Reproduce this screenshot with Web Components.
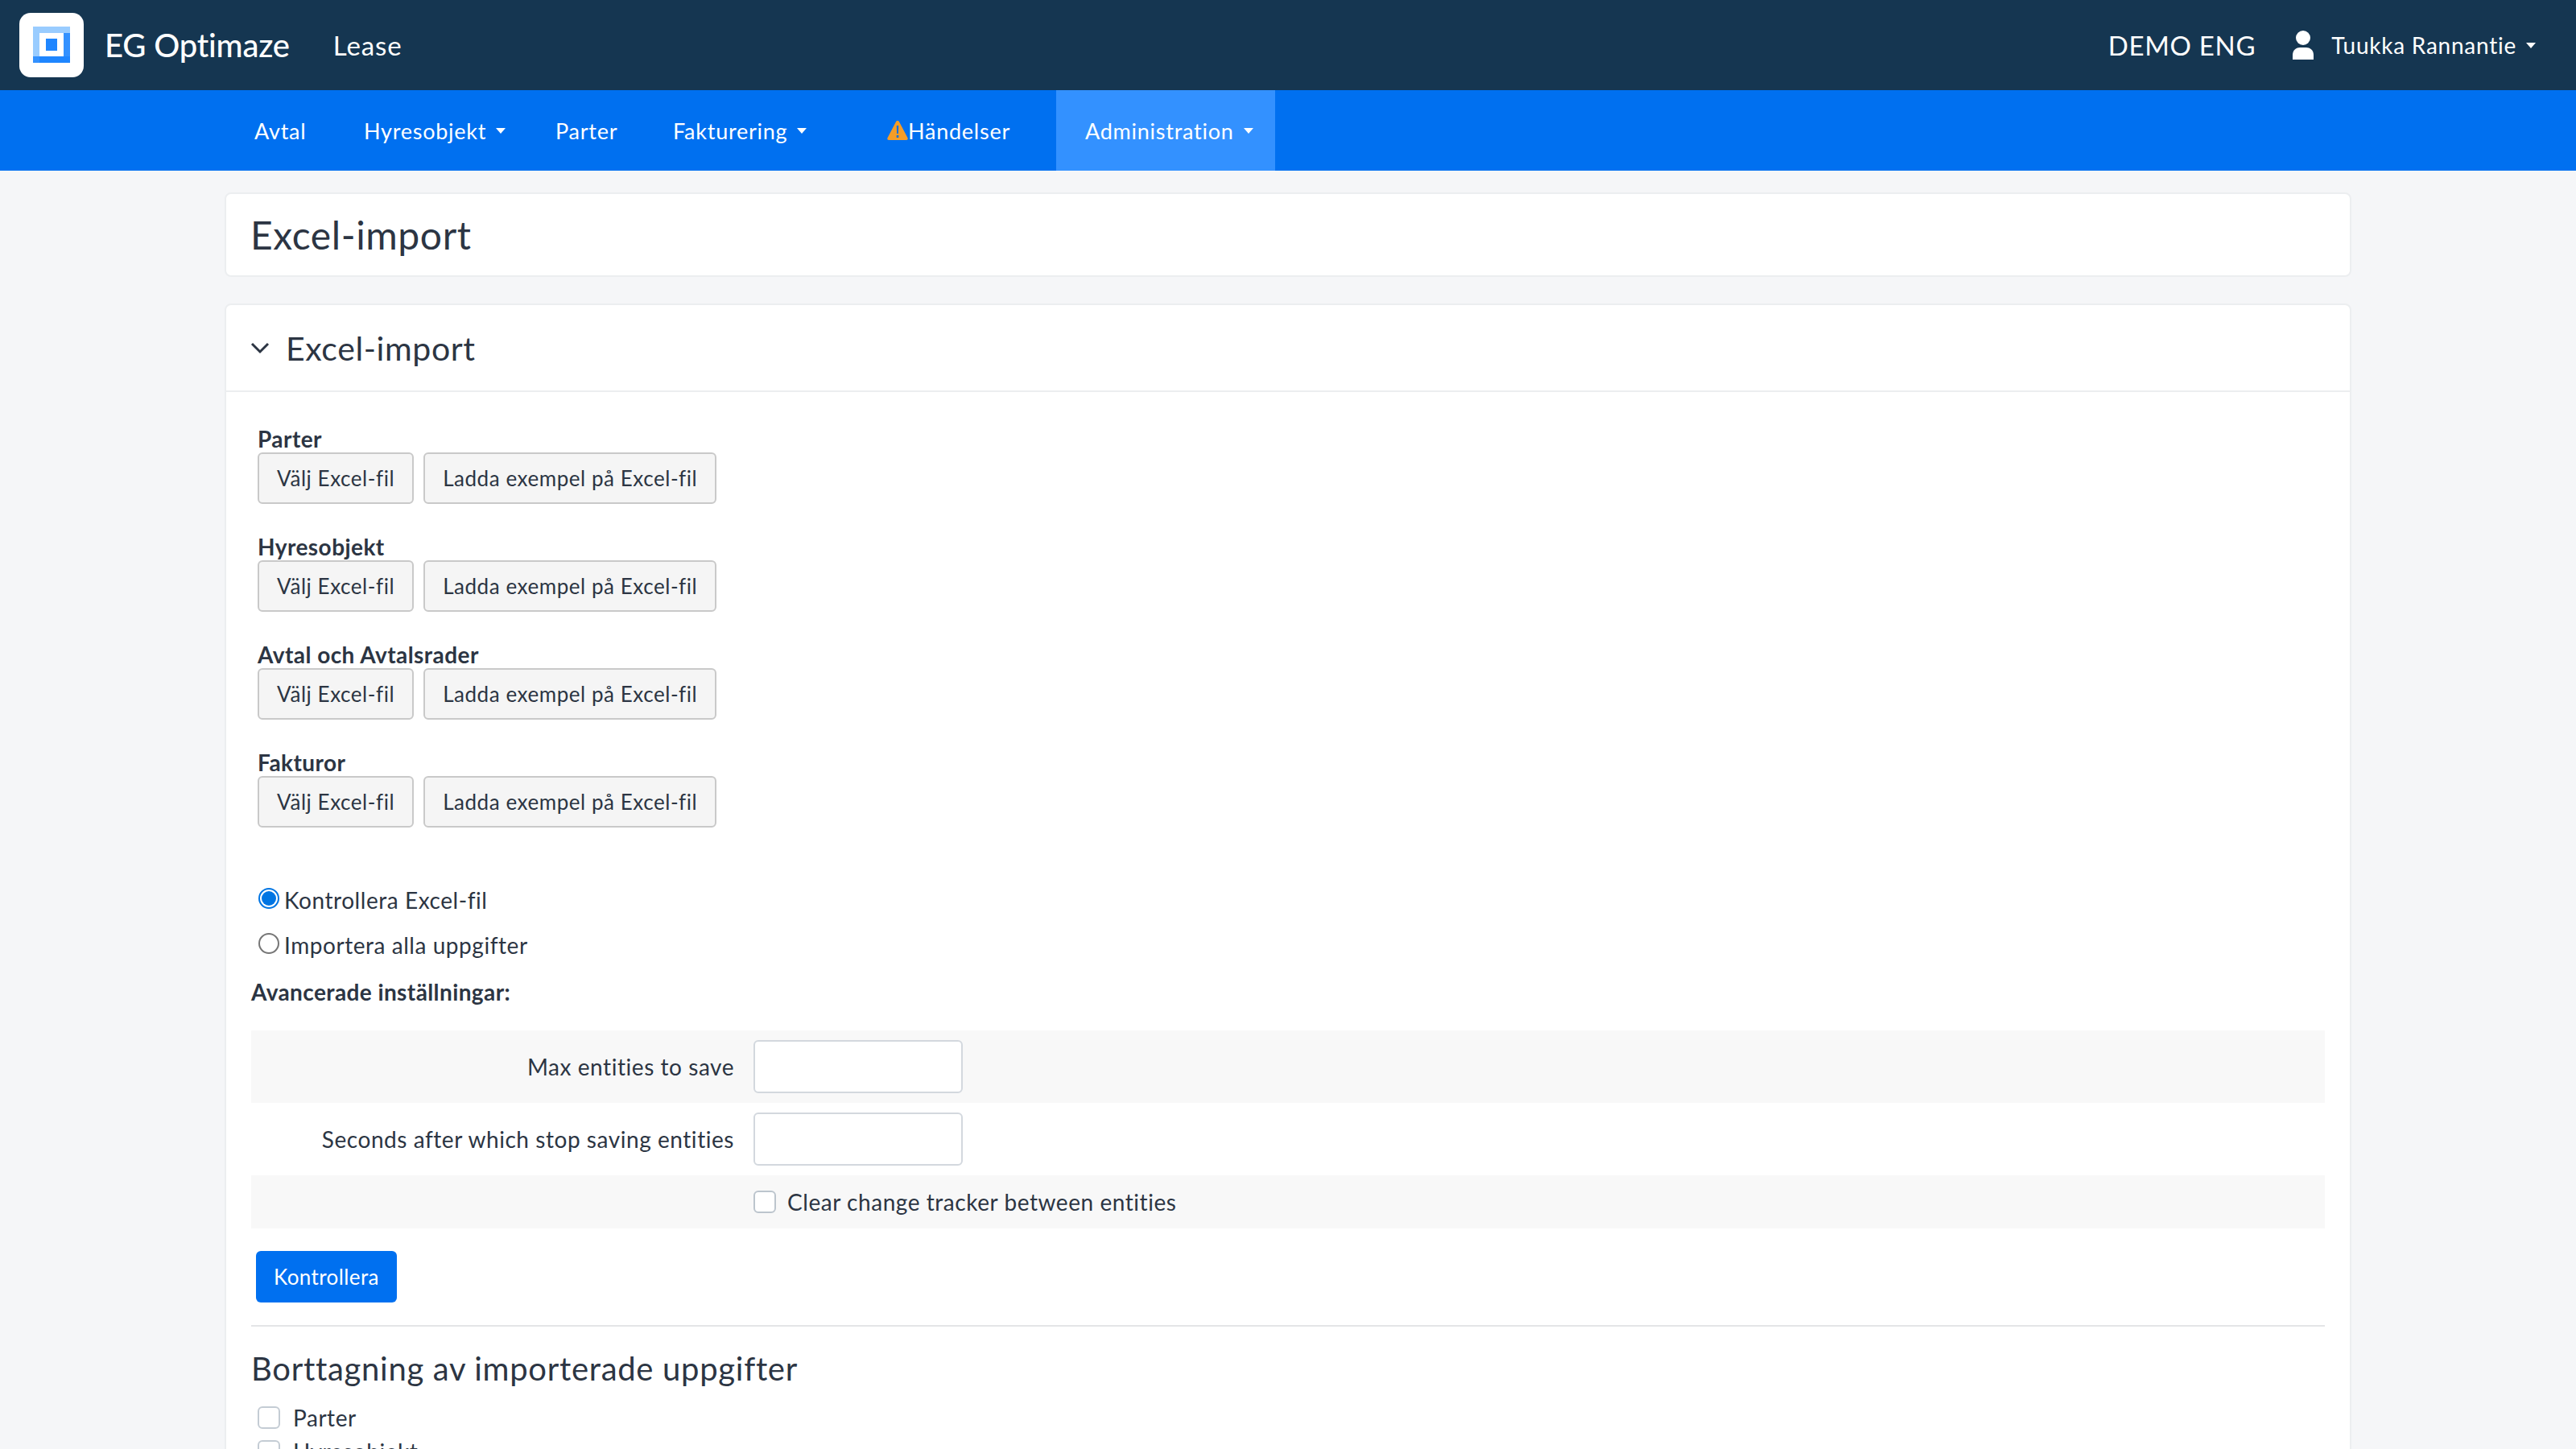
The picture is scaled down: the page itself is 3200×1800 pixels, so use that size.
<!DOCTYPE html>
<html><head><meta charset="utf-8"><title>Excel-import</title>
<style>
html,body{margin:0;height:1800px;overflow:hidden;background:#f5f6f8}
body{font-family:"Lato","Noto Sans",sans-serif;font-size:28px;color:#2c3543}
</style></head><body>
<app-header></app-header>
<app-nav>
  <nav-item style="--w:136px">Avtal</nav-item>
  <nav-item caret style="--w:238px">Hyresobjekt</nav-item>
  <nav-item style="--w:146px">Parter</nav-item>
  <nav-item caret style="--w:256px">Fakturering</nav-item>
  <nav-item warn style="--w:256px">Händelser</nav-item>
  <nav-item caret active style="--w:272px">Administration</nav-item>
</app-nav>
<page-main>
  <title-card>Excel-import</title-card>
  <import-panel heading="Excel-import">
    <file-row label="Parter"></file-row>
    <file-row label="Hyresobjekt"></file-row>
    <file-row label="Avtal och Avtalsrader"></file-row>
    <file-row label="Fakturor"></file-row>
    <radio-opt checked style="margin-top:27px">Kontrollera Excel-fil</radio-opt>
    <radio-opt>Importera alla uppgifter</radio-opt>
    <adv-settings></adv-settings>
    <check-line style="margin-top:14px">Parter</check-line>
    <check-line>Hyresobjekt</check-line>
  </import-panel>
</page-main>
<script>
const def=(n,html,extra)=>{customElements.define(n,class extends HTMLElement{
  connectedCallback(){if(this.shadowRoot)return;const s=this.attachShadow({mode:'open'});
    s.innerHTML=typeof html==='function'?html(this):html;}
});};
const caret='<svg width="12" height="7" viewBox="0 0 12 7" style="margin-left:12px;flex:none"><path d="M0 0h12L6 7z" fill="#fff"/></svg>';
def('app-header',`<style>:host{display:flex;align-items:center;height:112px;background:#153651;color:#fff;padding:0 50px 0 24px}
.logo{width:80px;height:80px;flex:none}
.brand{font-size:40px;margin-left:26px;letter-spacing:-.2px;font-weight:500}
.app{font-size:33px;margin-left:54px;letter-spacing:.9px}
.sp{flex:1}
.demo{font-size:33px;letter-spacing:.7px}
.user{width:26px;height:36px;margin-left:46px;flex:none}
.name{font-size:28px;margin-left:22px;letter-spacing:.75px}
</style>
<svg class="logo" viewBox="0 0 80 80"><rect width="80" height="80" rx="14" fill="#fff"/>
<path d="M17 17h46v8H25v29h-8z" fill="#99ccff"/><path d="M17 25h0v29h8v0z" fill="#99ccff"/>
<path d="M55 25h8v37H17v-8h38z" fill="#3391ff"/><path d="M25 54h38v8H25z" fill="#1f86ff"/>
<path d="M33 32h14v15H33z" fill="#1f86ff"/></svg>
<span class="brand">EG Optimaze</span><span class="app">Lease</span><span class="sp"></span>
<span class="demo">DEMO ENG</span>
<svg class="user" viewBox="0 0 26 36"><circle cx="13" cy="9" r="9" fill="#fff"/><path d="M0 36v-6c0-6 5-9 9-9h8c4 0 9 3 9 9v6z" fill="#fff"/></svg>
<span class="name">Tuukka Rannantie</span>${caret}`);
def('app-nav',`<style>:host{display:flex;height:100px;background:#0070f0;padding-left:280px}</style><slot></slot>`);
def('nav-item',h=>`<style>:host{display:flex;align-items:center;height:100px;width:var(--w);box-sizing:border-box;padding-left:36px;color:#fff;font-size:27px;letter-spacing:.75px;flex:none}
:host([active]){background:#3391ff}:host([warn]){padding-left:46px}
.w{width:26px;height:24px;flex:none}</style>
${h.hasAttribute('warn')?'<svg class="w" viewBox="0 0 26 24"><path d="M13 0c1 0 1.600.5 2 1.300l10.500 20c.6 1.300-.1 2.700-1.500 2.700H2c-1.400 0-2.100-1.400-1.500-2.700L11 1.300C11.400.5 12 0 13 0z" fill="#f59d27"/><path d="M11.800 6h2.400l-.3 10h-1.800zM11.700 18h2.600v3h-2.600z" fill="#0a6fe0"/></svg>':''}
<slot></slot>${h.hasAttribute('caret')?caret:''}`);
def('page-main',`<style>:host{display:flex;flex-direction:column;gap:33px;margin:27px 279px 0 279px}</style><slot></slot>`);
def('title-card',`<style>:host{display:flex;align-items:center;height:105px;box-sizing:border-box;padding-left:30px;background:#fff;border:2px solid #eceef0;border-radius:8px;font-size:48px;letter-spacing:.6px;font-weight:400;color:#2c3543}</style><slot></slot>`);
def('import-panel',h=>`<style>:host{display:block;background:#fff;border:2px solid #eceef0;border-radius:8px}
.h{display:flex;align-items:center;height:108px;box-sizing:border-box;border-bottom:2px solid #eceef0;padding-left:30px;font-size:41px;letter-spacing:.6px}
.h svg{width:24px;height:16px;margin-right:20px;flex:none}
.b{padding:40px 31px 40px 31px}</style>
<div class="h"><svg viewBox="0 0 24 16"><path d="M2 3l10 10L22 3" fill="none" stroke="#2c3543" stroke-width="3"/></svg>${h.getAttribute('heading')}</div>
<div class="b"><slot></slot></div>`);
const btn=`display:inline-flex;align-items:center;height:64px;box-sizing:border-box;border:2px solid #c9c9c9;border-radius:6px;background:#f5f5f5;padding:0 22px;font-size:26px;letter-spacing:.55px;color:#2c3543`;
def('file-row',h=>`<style>:host{display:block;height:134px;padding-left:8px}
.l{font-weight:700;font-size:28px;line-height:36px;height:35px;letter-spacing:.45px;padding-top:0}
.r{display:flex;gap:12px}.bt{${btn}}</style>
<div class="l">${h.getAttribute('label')}</div><div class="r"><span class="bt">Välj Excel-fil</span><span class="bt">Ladda exempel på Excel-fil</span></div>`);
def('radio-opt',h=>`<style>:host{display:flex;align-items:center;height:56px;padding-left:9px;letter-spacing:.55px;font-size:28px}
.c{width:26px;height:26px;box-sizing:border-box;border-radius:50%;border:2px solid ${h.hasAttribute('checked')?'#0075e3':'#767676'};margin-right:6px;margin-top:-4px;background:#fff;display:flex;align-items:center;justify-content:center;flex:none}
.c i{width:18px;height:18px;border-radius:50%;background:#0075e3;display:${h.hasAttribute('checked')?'block':'none'}}</style><span class="c"><i></i></span><slot></slot>`);
def('check-line',`<style>:host{display:flex;align-items:center;height:42px;padding-left:8px;font-size:28px;letter-spacing:.55px}
.c{width:28px;height:28px;box-sizing:border-box;border:2px solid #c4ccd4;border-radius:6px;background:#fff;margin-right:16px;flex:none}</style><span class="c"></span><slot></slot>`);
def('adv-row',h=>`<style>:host{display:grid;grid-template-columns:600px 1fr;column-gap:24px;align-items:center;height:90px;font-size:28px;letter-spacing:.55px}
:host([odd]){background:#f8f8f8}
.l{text-align:right}
input{display:block;width:260px;height:66px;box-sizing:border-box;border:2px solid #d3d8de;border-radius:6px;background:#fff;margin:0;padding:0;outline:0}</style>
<div class="l">${h.getAttribute('label')}</div><div><input type="text" aria-label="${h.getAttribute('label')}"></div>`);
def('adv-settings',`<style>:host{display:block}
.t{font-weight:700;font-size:28px;letter-spacing:.4px;line-height:36px;margin:12px 0 30px}
.cb{display:grid;grid-template-columns:600px 1fr;column-gap:24px;align-items:center;height:66px;background:#f8f8f8}
.in{display:flex;align-items:center}
.c{width:28px;height:28px;box-sizing:border-box;border:2px solid #bcc5cd;border-radius:6px;background:#fff;margin-right:14px;flex:none}
.in{letter-spacing:.55px}
.k{display:inline-flex;align-items:center;height:64px;box-sizing:border-box;padding:0 22px;background:#0070f0;color:#fff;border-radius:6px;font-size:26px;letter-spacing:.4px;margin:28px 0 28px 6px}
hr{border:0;border-top:2px solid #e4e5e7;margin:0}
h3{font-weight:400;font-size:40px;letter-spacing:.7px;line-height:52px;margin:26px 0 0}</style>
<div class="t">Avancerade inställningar:</div>
<adv-row odd label="Max entities to save"></adv-row>
<adv-row label="Seconds after which stop saving entities"></adv-row>
<div class="cb"><span></span><span class="in"><span class="c"></span>Clear change tracker between entities</span></div>
<div><span class="k">Kontrollera</span></div><hr>
<h3>Borttagning av importerade uppgifter</h3>`);
</script>
</body></html>
